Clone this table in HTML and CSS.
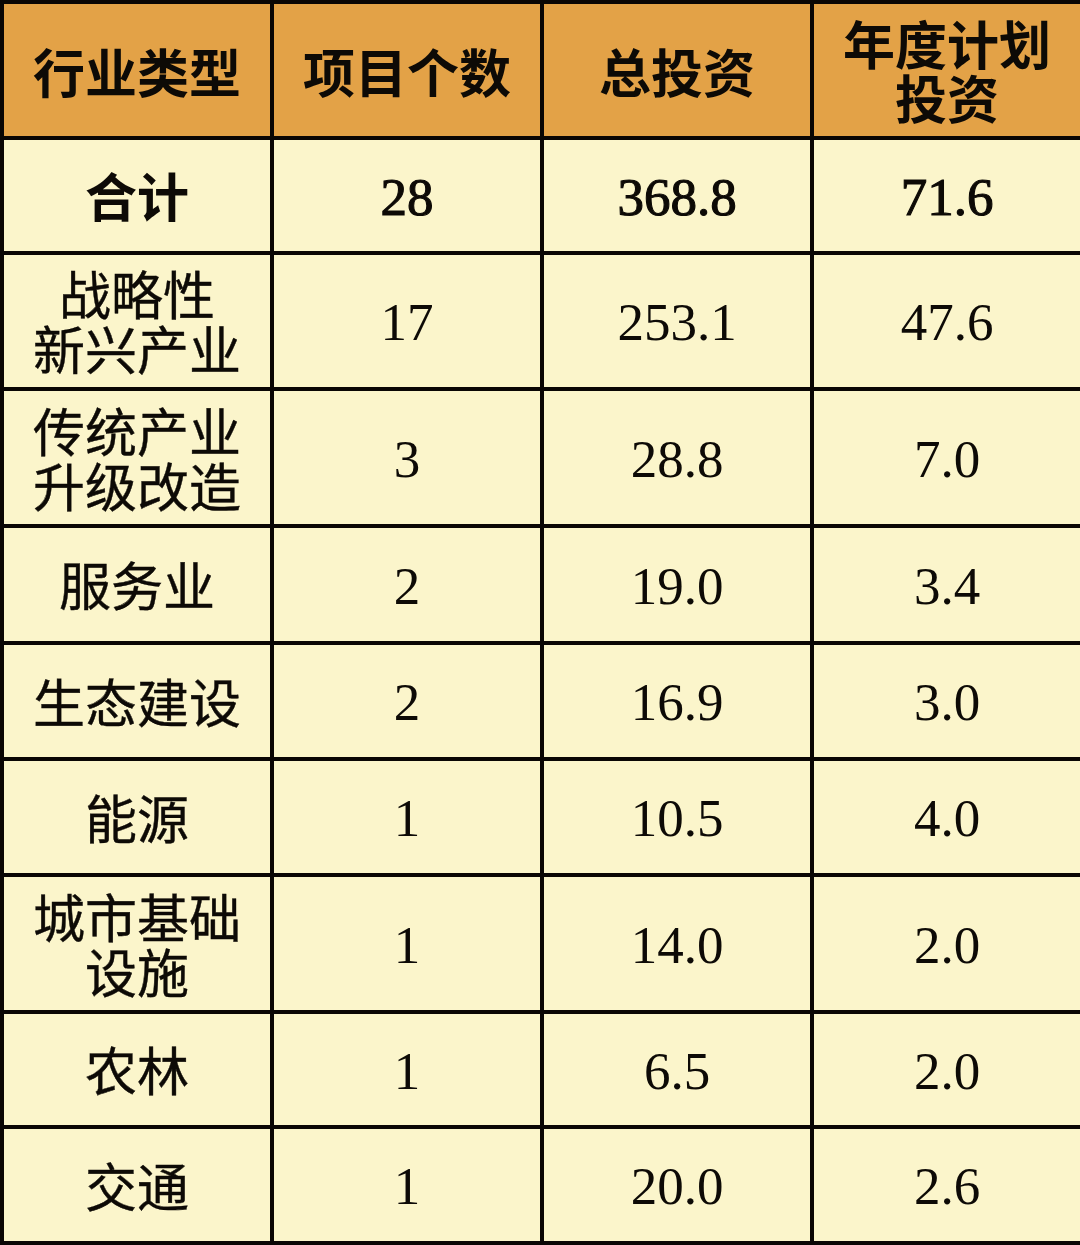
FILE: index.html
```html
<!DOCTYPE html>
<html lang="zh-CN">
<head>
<meta charset="utf-8">
<title>行业类型</title>
<link rel="stylesheet" href="styles.css">
</head>
<body>
<div class="table">
  <div class="cell head">行业类型</div>
  <div class="cell head">项目个数</div>
  <div class="cell head">总投资</div>
  <div class="cell head two">年度计划<br>投资</div>

  <div class="cell zh bold">合计</div>
  <div class="cell num semibold">28</div>
  <div class="cell num semibold">368.8</div>
  <div class="cell num semibold">71.6</div>

  <div class="cell zh two">战略性<br>新兴产业</div>
  <div class="cell num">17</div>
  <div class="cell num">253.1</div>
  <div class="cell num">47.6</div>

  <div class="cell zh two">传统产业<br>升级改造</div>
  <div class="cell num">3</div>
  <div class="cell num">28.8</div>
  <div class="cell num">7.0</div>

  <div class="cell zh">服务业</div>
  <div class="cell num">2</div>
  <div class="cell num">19.0</div>
  <div class="cell num">3.4</div>

  <div class="cell zh">生态建设</div>
  <div class="cell num">2</div>
  <div class="cell num">16.9</div>
  <div class="cell num">3.0</div>

  <div class="cell zh">能源</div>
  <div class="cell num">1</div>
  <div class="cell num">10.5</div>
  <div class="cell num">4.0</div>

  <div class="cell zh two">城市基础<br>设施</div>
  <div class="cell num">1</div>
  <div class="cell num">14.0</div>
  <div class="cell num">2.0</div>

  <div class="cell zh">农林</div>
  <div class="cell num">1</div>
  <div class="cell num">6.5</div>
  <div class="cell num">2.0</div>

  <div class="cell zh">交通</div>
  <div class="cell num">1</div>
  <div class="cell num">20.0</div>
  <div class="cell num">2.6</div>
</div>
</body>
</html>
```

FILE: styles.css
```css
html, body {
  margin: 0;
  padding: 0;
  overflow: hidden;
  background: #fbf5cb;
}

.table {
  display: grid;
  grid-template-columns: repeat(4, 266px);
  grid-template-rows: 132px 111px 132px 133px 113px 112px 112px 133px 111px 112px;
  gap: 4px;
  padding: 4px;
  background: #0a0604;
  width: 1076px;
}

.cell {
  display: flex;
  align-items: center;
  justify-content: center;
  text-align: center;
  background: #fbf5cb;
  color: #0d0a06;
  font-family: "Noto Sans CJK SC", "Noto Sans", sans-serif;
  font-size: 52px;
  line-height: 1.05;
}

.head {
  background: #e3a247;
  font-weight: 700;
  padding-top: 2px;
}

.head.two {
  line-height: 1.03;
  padding-top: 0;
}

.zh {
  font-weight: 400;
  -webkit-text-stroke: 0.4px #0d0a06;
}

.zh.two {
  line-height: 1.05;
}

.num {
  font-family: "Liberation Serif", "Times New Roman", serif;
  font-size: 53px;
  padding-top: 4px;
}

.bold {
  font-weight: 700;
  -webkit-text-stroke: 0;
}

.semibold {
  -webkit-text-stroke: 1.1px #0d0a06;
}
```
